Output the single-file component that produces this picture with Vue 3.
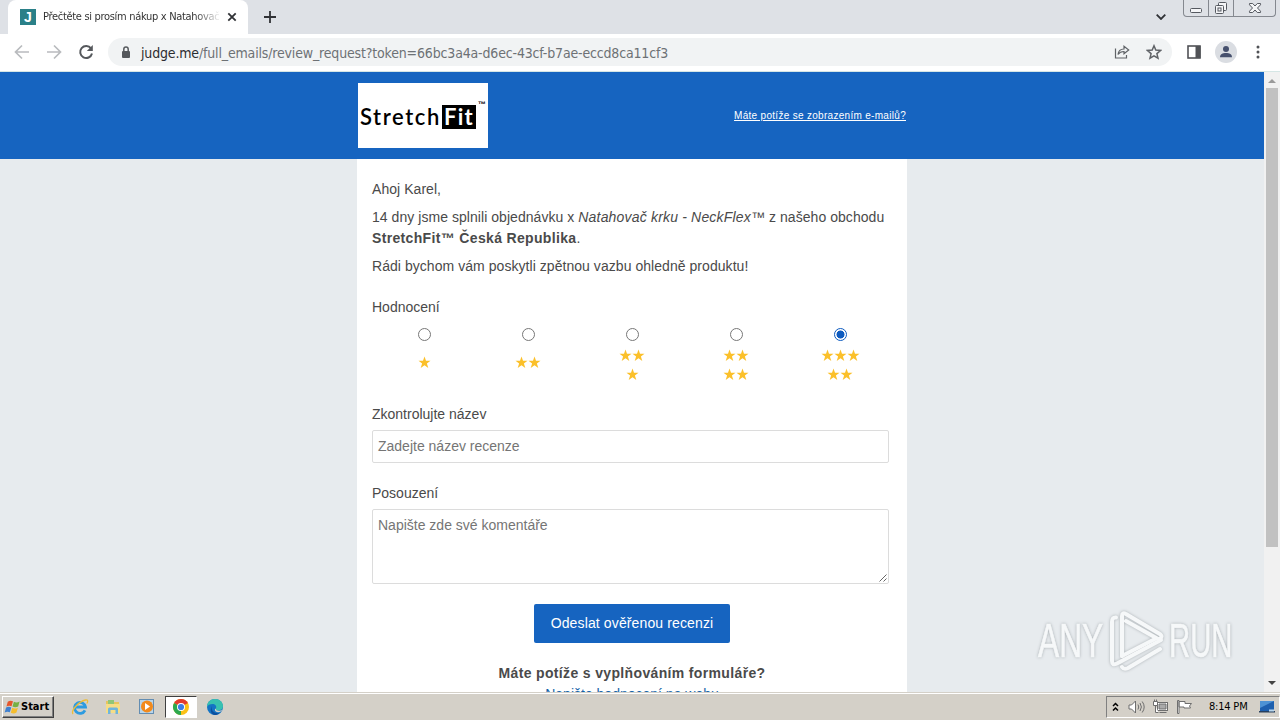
<template>
  <div class="screen">
    <div class="tab-strip">
      <div class="tab">
        <span class="favicon">J</span>
        <span class="tab-title">Přečtěte si prosím nákup x Natahovač</span>
        <svg class="tab-close" viewBox="0 0 10 10"><path d="M1.3 1.3l7.4 7.4M8.7 1.3L1.3 8.7" /></svg>
      </div>
      <svg class="new-tab" viewBox="0 0 12 12"><path d="M6 0v12M0 6h12" /></svg>
      <svg class="tab-search" viewBox="0 0 10 6"><path d="M.7 .7L5 5 9.300 .7" /></svg>
      <div class="window-buttons">
        <span><svg width="14" height="16" viewBox="0 0 14 16"><rect x="1.500" y="8.500" width="11" height="4" rx="1" /></svg></span>
        <span><svg width="14" height="16" viewBox="0 0 14 16"><rect x="4.500" y="2.500" width="8" height="8" rx="1" /><rect class="fill" x="1.500" y="5.500" width="8" height="8" rx="1" /><rect x="4" y="8" width="3" height="3" /></svg></span>
        <span class="last"><svg width="14" height="16" viewBox="0 0 14 16"><path class="fill" d="M1.500 3.500h3.200L7 6l2.300-2.500h3.200v1.300L9.500 8l3 3.200v1.300H9.300L7 10l-2.300 2.500H1.500v-1.300l3-3.200-3-3.200z" /></svg></span>
      </div>
    </div>

    <div class="toolbar">
      <svg class="nav-icon muted" viewBox="0 0 16 16"><path d="M15 8H2M8 1.500L1.500 8 8 14.500" /></svg>
      <svg class="nav-icon muted" viewBox="0 0 16 16"><path d="M1 8h13M8 1.500L14.500 8 8 14.500" /></svg>
      <svg class="nav-icon reload" viewBox="0 0 16 16"><path d="M13 4.400A6 6 0 1 0 14 9.500" /><path class="solid" d="M14.800 1v6H8.800z" /></svg>
      <div class="omnibox">
        <svg class="lock" viewBox="0 0 10 13"><rect x="1" y="5" width="8" height="7" rx="1" /><path d="M2.800 5.500V3.300a2.200 2.200 0 0 1 4.400 0v2.200" /></svg>
        <span class="url"><b>judge.me</b>/full_emails/review_request?token=66bc3a4a-d6ec-43cf-b7ae-eccd8ca11cf3</span>
        <svg class="share" viewBox="0 0 16 16"><path d="M1.500 4.500v9.500h11V11" /><path d="M4 10.500c.4-3.800 2.500-5.500 6-5.500V2.300L14.700 6 10 9.800V7.500c-2.800 0-4.500.8-6 3z" /></svg>
        <svg class="bookmark" viewBox="0 0 16 16"><path d="M8 1.800l1.800 4.300 4.700.4-3.600 3.100 1.100 4.600L8 11.800l-4 2.400 1.100-4.600L1.500 6.500l4.700-.4z" /></svg>
      </div>
      <svg class="side-panel" viewBox="0 0 14 14"><rect x="1" y="1" width="12" height="12" /><path class="solid" d="M8.500 1h5v12h-5z" /></svg>
      <svg class="avatar" viewBox="0 0 22 22"><circle class="disc" cx="11" cy="11" r="11" /><circle cx="11" cy="8" r="3" /><path d="M5 16.300c0-3 2.500-4.300 6-4.300s6 1.300 6 4.300z" /></svg>
      <svg class="menu" viewBox="0 0 4 14"><circle cx="2" cy="2" r="1.500" /><circle cx="2" cy="7" r="1.500" /><circle cx="2" cy="12" r="1.500" /></svg>
    </div>

    <div class="viewport">
      <div class="page">
        <header class="mail-header">
          <div class="header-inner">
            <div class="logo"><span class="logo-a">Stretch</span><span class="logo-b">Fit</span><span class="logo-tm">™</span></div>
            <a class="trouble">Máte potíže se zobrazením e-mailů?</a>
          </div>
        </header>
        <main class="card">
          <p class="greet">Ahoj Karel,</p>
          <p>14 dny jsme splnili objednávku x <i>Natahovač krku - NeckFlex™</i> z našeho obchodu<br /><b>StretchFit™ Česká Republika</b>.</p>
          <p class="feedback">Rádi bychom vám poskytli zpětnou vazbu ohledně produktu!</p>
          <div class="label rating-label">Hodnocení</div>
          <div class="ratings">
            <label v-for="(rows, i) in ratings" :key="i" class="rating">
              <span class="radio" :class="{ checked: selected === i }" @click="selected = i"></span>
              <span class="stars" :class="{ single: rows.length === 1 }">
                <span v-for="(n, r) in rows" :key="r" class="star-row">
                  <svg v-for="s in n" :key="s" class="star" viewBox="0 0 13 13"><path d="M6.500 .5l1.500 4.300h4.500L8.900 7.500l1.400 4.400-3.800-2.700-3.800 2.700 1.400-4.400L.5 4.800H5z" /></svg>
                </span>
              </span>
            </label>
          </div>
          <div class="label title-label">Zkontrolujte název</div>
          <div class="field">Zadejte název recenze</div>
          <div class="label body-label">Posouzení</div>
          <div class="field area">
            Napište zde své komentáře
            <svg class="grip" viewBox="0 0 8 8"><path d="M.5 7.500l7-7M4.500 7.500l3-3" /></svg>
          </div>
          <button class="submit">Odeslat ověřenou recenzi</button>
          <div class="help">Máte potíže s vyplňováním formuláře?</div>
          <a class="web-link">Napište hodnocení na webu</a>
        </main>
      </div>
      <div class="scrollbar">
        <svg viewBox="0 0 8 4"><path class="up" d="M0 4l4-4 4 4z" /></svg>
        <div class="thumb"></div>
        <svg class="down-arrow" viewBox="0 0 8 4"><path d="M0 0l4 4 4-4z" /></svg>
      </div>
      <div class="watermark">
        <span class="any">ANY</span>
        <svg viewBox="0 0 56 64">
          <path d="M7 8.500Q3 8 3 13v39q0 5 5 2.500L52 31" />
          <path d="M13 47V7q0-4 4-2l33 19.500q5 3 0 6L17 12M13 58q2 3 6 1l32-19" />
          <path d="M13 47l33-17" />
        </svg>
        <span class="run">RUN</span>
      </div>
    </div>

    <div class="taskbar">
      <div class="start">
        <svg viewBox="0 0 18 16">
          <path fill="#e6562b" d="M4 2.500c2-1.500 4-1.300 5.500-.5L8 7.300C6.300 6.300 4.500 6.400 2.600 7.400z" />
          <path fill="#76b043" d="M10.500 2.500c2 1 3.800.9 6-.3L15 7.500c-2 1.200-4 1.100-6 .1z" />
          <path fill="#3f80cf" d="M2.200 8.500c2-1.200 3.800-1.100 5.500-.1L6.200 13.600c-1.700-1-3.500-.9-5.500.2z" />
          <path fill="#f5bd2c" d="M8.700 8.900c2 1 3.900.9 6-.2l-1.500 5.200c-2 1.200-4 1.100-6 .1z" />
        </svg>
        <span>Start</span>
      </div>
      <div class="quick">
        <svg viewBox="0 0 18 18">
          <path d="M14 12.300A5.500 5.500 0 1 1 14.500 9H5" fill="none" stroke="#2d9be0" stroke-width="2.800" />
          <path d="M2 16C-.5 12.500 8 3.500 14.500 2c3-.6 2.300 2 1.300 3.500" fill="none" stroke="#edbd38" stroke-width="1.300" />
        </svg>
      </div>
      <div class="quick">
        <svg viewBox="0 0 18 18">
          <path d="M2 3h5l1 1h7v10H2z" fill="#e8c45d" />
          <path d="M4 2h6v5H4z" fill="#8fc678" />
          <path d="M2 6h14v9H2z" fill="#f6dd86" />
          <path d="M4 16v-5q0-1.500 1.500-1.500h7Q14 9.500 14 11v5h-2.500v-4h-5v4z" fill="#6fb5dc" />
        </svg>
      </div>
      <div class="quick">
        <svg viewBox="0 0 18 18">
          <rect x="1.500" y="1.500" width="14" height="14" fill="#b8d5ea" stroke="#638db2" />
          <circle cx="9" cy="8.500" r="6" fill="#f28a1c" />
          <path d="M7 5l5 3.500L7 12z" fill="#fff" />
        </svg>
      </div>
      <div class="quick active">
        <svg viewBox="0 0 18 18">
          <circle cx="9" cy="9" r="8" fill="#fbc116" />
          <path d="M9 9L2.070 5A8 8 0 0 1 15.930 5z" fill="#e33b2e" />
          <path d="M9 9L9 17A8 8 0 0 1 2.070 5z" fill="#2da94f" />
          <circle cx="9" cy="9" r="4" fill="#fff" />
          <circle cx="9" cy="9" r="3.100" fill="#3c7de6" />
        </svg>
      </div>
      <div class="quick">
        <svg viewBox="0 0 18 18">
          <circle cx="9" cy="9" r="8" fill="#1474c4" />
          <path d="M1 9C1 4 4.500 1 9 1c5 0 8 3.500 8 7 0 3-2.500 4.500-5 4.500-2 0-2.500-1-2-2C11 8 9 6 6.500 6 4 6 1.500 7 1 9z" fill="#38c1b0" />
          <path d="M6 8c-1.500 4 2 8 7.500 7-1.500 1.500-3 2-4.500 2-4 0-5.500-5.500-3-9z" fill="#0c4f9e" />
          <path d="M10 10.500c-.5 1.500 1 2.200 2.500 2.200 1.700 0 3-.5 4-1.500-1 3-5 4-7 2-1-1-.7-2.300.5-2.700z" fill="#d4d0c8" />
        </svg>
      </div>
      <div class="tray">
        <svg class="chevrons" viewBox="0 0 7 10"><path d="M1 4l2.500-2.500L6 4M1 8.500L3.500 6 6 8.500" /></svg>
        <svg class="speaker" viewBox="0 0 17 14"><path class="white" d="M1 5h2.500l4-4v12l-4-4H1z" /><path d="M10 4.500q1.500 2.500 0 5M12 3q2.800 4 0 8M14.200 1.500q4 5.500 0 11" /></svg>
        <svg class="network" viewBox="0 0 17 16"><rect class="white" x="5.500" y="3.500" width="10" height="8" /><path class="grey" d="M7 5h7v5H7z" /><path class="white" d="M1.500 2.500h4v4h-4zM2.500 .5v2M4.500 .5v2M3.500 6.500v7h3M7.500 13.500h7" /></svg>
        <svg class="flag" viewBox="0 0 17 16"><path class="white" d="M1.500 1.500h1.500v13H1.500zM3 2.500h6v2h6.500l-2 2.500 1 2H8v-1H3z" /></svg>
        <span class="clock">8:14 PM</span>
        <svg class="desktop" viewBox="0 0 16 12"><path d="M1 0h14v10H1z" fill="#1d5fae" /><path d="M1 0h14L1 7z" fill="#4d92d4" /><path d="M0 10h16v1.500H0z" fill="#29405d" /><path d="M10 8.500h5v2h-5z" fill="#b7d6ee" /></svg>
      </div>
    </div>
  </div>
</template>

<script setup>
import { ref } from "vue";

// stars on each line, per rating option
const ratings = [[1], [2], [2, 1], [2, 2], [3, 2]];
const selected = ref(4);
</script>

<style>
body {
  margin: 0;
  overflow: hidden;
}
</style>

<style scoped>
* {
  box-sizing: border-box;
}

svg {
  display: block;
  flex: none;
}

.screen {
  width: 1280px;
  height: 720px;
  display: flex;
  flex-direction: column;
  overflow: hidden;
  font-family: "Liberation Sans", Arial, sans-serif;
  background: #fff;
}

/* tabs */
.tab-strip {
  height: 34px;
  flex: none;
  display: flex;
  align-items: center;
  padding-left: 8px;
  background: #dee1e6;
}

.tab {
  width: 240px;
  height: 34px;
  display: flex;
  align-items: center;
  padding-left: 12px;
  background: #fff;
  border-radius: 8px 8px 0 0;
}

.favicon {
  width: 16px;
  height: 16px;
  background: #2a8088;
  color: #fff;
  font: bold 14px/16px "Liberation Sans", sans-serif;
  text-align: center;
}

.tab-title {
  width: 176px;
  margin-left: 7px;
  overflow: hidden;
  white-space: nowrap;
  font: 11px/16px "DejaVu Sans Condensed", "DejaVu Sans", sans-serif;
  letter-spacing: -0.31px;
  color: #333;
  mask-image: linear-gradient(90deg, #000 152px, transparent 178px);
}

.tab-close {
  width: 10px;
  height: 10px;
  margin-left: 8px;
}

.tab-close path,
.new-tab path,
.tab-search path {
  fill: none;
  stroke: #303236;
  stroke-width: 1.8;
}

.new-tab {
  width: 12px;
  height: 12px;
  margin-left: 16px;
}

.tab-search {
  width: 10px;
  height: 6px;
  margin-left: auto;
}

.window-buttons {
  align-self: flex-start;
  height: 17px;
  display: flex;
  margin: 0 4px 0 17px;
  border: 1px solid #84888f;
  border-top: 0;
  border-radius: 0 0 4px 4px;
}

.window-buttons span {
  width: 25px;
  display: flex;
  justify-content: center;
  border-right: 1px solid #84888f;
}

.window-buttons .last {
  width: 41px;
  border-right: 0;
}

.window-buttons rect,
.window-buttons path {
  fill: none;
  stroke: #555960;
}

.window-buttons rect {
  fill: #f4f5f7;
}

.window-buttons .fill {
  fill: #f4f5f7;
}

/* toolbar */
.toolbar {
  height: 38px;
  flex: none;
  display: flex;
  align-items: center;
  padding: 0 20px 1px 14px;
  border-bottom: 1px solid #d5e6e5;
  background: #fff;
}

.nav-icon {
  width: 16px;
  height: 16px;
  margin-right: 16px;
}

.nav-icon path {
  fill: none;
  stroke: #55585c;
  stroke-width: 2;
}

.nav-icon.muted path {
  stroke: #b9bbbe;
  stroke-width: 1.7;
}

.nav-icon.reload {
  margin-right: 14px;
}

.nav-icon .solid {
  fill: #55585c;
  stroke: none;
}

.omnibox {
  width: 1064px;
  height: 28px;
  display: flex;
  align-items: center;
  padding: 0 10px 0 13px;
  border-radius: 14px;
  background: #f1f3f4;
}

.lock {
  width: 10px;
  height: 13px;
}

.lock rect {
  fill: #55585c;
}

.lock path {
  fill: none;
  stroke: #55585c;
  stroke-width: 1.5;
}

.url {
  margin: 1px auto 0 10px;
  font: 14px/20px "DejaVu Sans Condensed", "DejaVu Sans", sans-serif;
  color: #6d7175;
  letter-spacing: -0.165px;
  white-space: nowrap;
}

.url b {
  font-weight: inherit;
  color: #2c2d30;
}

.share,
.bookmark {
  width: 16px;
  height: 16px;
}

.bookmark {
  margin-left: 16px;
}

.share path,
.bookmark path {
  fill: none;
  stroke: #606367;
  stroke-width: 1.2;
}

.bookmark path {
  stroke-width: 1.5;
}

.side-panel {
  width: 14px;
  height: 14px;
  margin-left: 15px;
}

.side-panel rect {
  fill: none;
  stroke: #505256;
  stroke-width: 1.6;
}

.side-panel .solid {
  fill: #505256;
}

.avatar {
  width: 22px;
  height: 22px;
  margin-left: 14px;
  fill: #46506d;
}

.avatar .disc {
  fill: #dadde2;
}

.menu {
  width: 4px;
  height: 14px;
  margin-left: auto;
  fill: #505256;
}

/* page */
.viewport {
  position: relative;
  height: 620px;
  flex: none;
  display: flex;
  overflow: hidden;
}

.page {
  width: 1264px;
  display: flex;
  flex-direction: column;
  align-items: center;
  background: #e7ebee;
}

.mail-header {
  width: 100%;
  height: 87px;
  flex: none;
  display: flex;
  justify-content: center;
  background: #1664c0;
}

.header-inner {
  width: 550px;
  display: flex;
  align-items: center;
  justify-content: space-between;
  padding: 0 1px;
}

.logo {
  width: 130px;
  height: 65px;
  display: flex;
  align-items: center;
  padding: 2px 0 0 2px;
  background: #fff;
  color: #000;
}

.logo-a {
  width: 82px;
  font: 600 22px/24px Lato, sans-serif;
  letter-spacing: 1.6px;
  white-space: nowrap;
}

.logo-b {
  width: 34px;
  height: 24px;
  background: #000;
  color: #fff;
  text-align: center;
  font: bold 22px/23px Lato, sans-serif;
  letter-spacing: 1.2px;
}

.logo-tm {
  align-self: flex-start;
  margin: 15px 0 0 2px;
  font: bold 8px/10px "Liberation Sans", sans-serif;
}

.trouble {
  font-size: 10px;
  color: #fff;
  letter-spacing: 0.3px;
  text-decoration: underline;
  white-space: nowrap;
}

.card {
  width: 550px;
  flex: 1;
  display: flex;
  flex-direction: column;
  padding: 20px 18px 0 15px;
  background: #fff;
  color: #4a4a4a;
  font-size: 14px;
  line-height: 21px;
}

.card p {
  margin: 0 0 7px;
  white-space: nowrap;
  letter-spacing: 0.05px;
}

.card p i {
  letter-spacing: 0.18px;
}

.card p b {
  letter-spacing: 0.34px;
}

.label {
  height: 21px;
}

.rating-label {
  margin-top: 13px;
}

.ratings {
  width: 520px;
  height: 58px;
  display: grid;
  grid-template-columns: repeat(5, 104px);
  margin-top: 10px;
}

.rating {
  display: flex;
  flex-direction: column;
  align-items: center;
}

.radio {
  width: 13px;
  height: 13px;
  border: 1px solid #777;
  border-radius: 50%;
  background: #fff;
}

.radio.checked {
  border-color: #0d5bc0;
  background: radial-gradient(circle, #0d5bc0 3.7px, #fff 4.3px);
}

.stars {
  height: 38px;
  display: flex;
  flex-direction: column;
  justify-content: center;
  margin-top: 5px;
}

.stars.single {
  height: 33px;
}

.star-row {
  height: 19px;
  display: flex;
  align-items: center;
  justify-content: center;
}

.star {
  width: 13px;
  height: 13px;
  fill: #fbc02a;
}

.title-label {
  margin-top: 18px;
}

.field {
  height: 33px;
  margin-top: 5px;
  padding: 5px;
  border: 1px solid #dcdcdc;
  border-radius: 2px;
  color: #757575;
}

.body-label {
  margin-top: 20px;
}

.area {
  position: relative;
  height: 75px;
}

.grip {
  position: absolute;
  right: 1px;
  bottom: 1px;
  width: 8px;
  height: 8px;
}

.grip path {
  fill: none;
  stroke: #666;
}

.submit {
  width: 196px;
  height: 39px;
  flex: none;
  align-self: center;
  margin: 20px -3px 0 0;
  padding: 0;
  border: 0;
  border-radius: 2px;
  background: #1664c0;
  color: #fff;
  font: 14px/39px "Liberation Sans", sans-serif;
  letter-spacing: 0.13px;
}

.help {
  margin: 20px -3px 0 0;
  text-align: center;
  font-weight: bold;
  letter-spacing: 0.35px;
}

.web-link {
  margin-right: -3px;
  text-align: center;
  color: #1664a8;
}

/* scrollbar */
.scrollbar {
  width: 16px;
  display: flex;
  flex-direction: column;
  align-items: center;
  padding: 7px 0;
  background: #f1f1f1;
}

.scrollbar svg {
  width: 8px;
  height: 4px;
  fill: #444;
}

.scrollbar .up {
  fill: #9a9a9a;
}

.thumb {
  width: 12px;
  height: 459px;
  margin-top: 5px;
  background: #c1c1c1;
}

.down-arrow {
  margin-top: auto;
}

.watermark {
  position: absolute;
  left: 1038px;
  top: 536px;
  width: 196px;
  height: 66px;
  display: flex;
  align-items: center;
  justify-content: space-between;
  color: #f6f8f9;
  font: 48px/68px "Liberation Sans", sans-serif;
  -webkit-text-stroke: 0.7px #f6f8f9;
  filter: drop-shadow(0 0 1.5px #a9afb3);
}

.watermark span {
  width: 66px;
  white-space: nowrap;
  transform: scaleX(0.66);
  transform-origin: 0 50%;
}

.watermark .run {
  width: 65px;
  transform: scaleX(0.61);
}

.watermark svg {
  width: 56px;
  height: 64px;
}

.watermark path {
  fill: none;
  stroke: #f6f8f9;
  stroke-width: 4;
  stroke-linecap: round;
  stroke-linejoin: round;
}

/* taskbar */
.taskbar {
  height: 28px;
  flex: none;
  display: flex;
  align-items: center;
  padding: 1px 0 0 2px;
  border-top: 1px solid #d4d0c8;
  background: #d4d0c8;
  box-shadow: inset 0 1px #fff;
}

.start {
  width: 52px;
  height: 22px;
  display: flex;
  align-items: center;
  padding-left: 1px;
  border: 1px solid;
  border-color: #fff #404040 #404040 #fff;
  box-shadow: inset -1px -1px #808080;
  margin-right: 9.5px;
  color: #000;
}

.start svg {
  width: 17px;
  height: 16px;
}

.start span {
  font: bold 11px/16px "DejaVu Sans Condensed", "DejaVu Sans", sans-serif;
}

.quick {
  width: 32px;
  height: 22px;
  display: flex;
  align-items: center;
  justify-content: center;
  margin-right: 1.8px;
}

.quick svg {
  width: 18px;
  height: 18px;
}

.quick.active {
  background: #fff;
  border: 1px solid;
  border-color: #404040 #fff #fff #404040;
}

.tray {
  width: 174px;
  height: 22px;
  display: flex;
  align-items: center;
  margin-left: auto;
  padding: 0 4px 0 5px;
  border: 1px solid;
  border-color: #808080 #fff #fff #808080;
}

.chevrons {
  width: 7px;
  height: 10px;
}

.chevrons path {
  fill: none;
  stroke: #000;
  stroke-width: 1.5;
}

.speaker,
.network,
.flag {
  fill: none;
  stroke: #6e6e6e;
}

.speaker {
  width: 17px;
  height: 14px;
  margin-left: 9px;
}

.network {
  width: 17px;
  height: 16px;
  margin-left: 7px;
}

.flag {
  width: 17px;
  height: 16px;
  margin-left: 7px;
}

.white {
  fill: #fff;
}

.grey {
  fill: #aaa;
}

.clock {
  width: 41px;
  margin-left: 16px;
  white-space: nowrap;
  font: 11px/16px "DejaVu Sans Condensed", "DejaVu Sans", sans-serif;
  letter-spacing: -0.2px;
  color: #000;
}

.desktop {
  width: 16px;
  height: 12px;
  margin-left: auto;
}
</style>
